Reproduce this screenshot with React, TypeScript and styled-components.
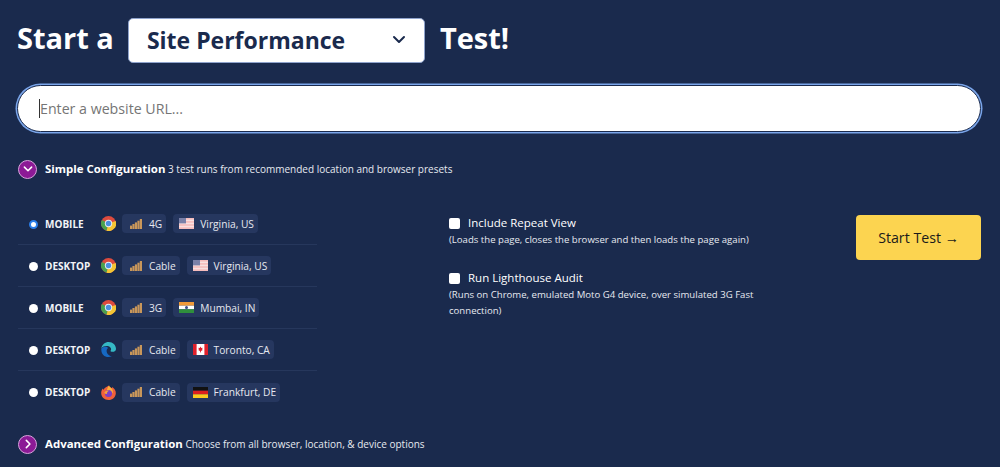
import React from 'react';
import styled, { createGlobalStyle } from 'styled-components';

const GlobalStyle = createGlobalStyle`
  html, body {
    margin: 0;
    padding: 0;
    background: #1a2a4d;
    overflow: hidden;
  }
  body {
    font-family: 'Open Sans', sans-serif;
    color: #fff;
  }
`;

type Row = {
  device: string;
  browser: 'chrome' | 'edge' | 'firefox';
  speed: string;
  flag: 'us' | 'in' | 'ca' | 'de';
  location: string;
  checked?: boolean;
};

const rows: Row[] = [
  { device: 'MOBILE', browser: 'chrome', speed: '4G', flag: 'us', location: 'Virginia, US', checked: true },
  { device: 'DESKTOP', browser: 'chrome', speed: 'Cable', flag: 'us', location: 'Virginia, US' },
  { device: 'MOBILE', browser: 'chrome', speed: '3G', flag: 'in', location: 'Mumbai, IN' },
  { device: 'DESKTOP', browser: 'edge', speed: 'Cable', flag: 'ca', location: 'Toronto, CA' },
  { device: 'DESKTOP', browser: 'firefox', speed: 'Cable', flag: 'de', location: 'Frankfurt, DE' },
];

const BrowserIcon = ({ name }: { name: Row['browser'] }) => {
  if (name === 'chrome') {
    return (
      <svg width="15" height="15" viewBox="0 0 16 16">
        <circle cx="8" cy="8" r="8" fill="#dd4b3e" />
        <path d="M8 8 L1 4.2 A8 8 0 0 0 6 15.8 Z" fill="#4aa14f" />
        <path d="M8 8 L15.6 5.2 A8 8 0 0 1 6 15.8 Z" fill="#f4c534" />
        <circle cx="8" cy="8" r="3.9" fill="#e8eef6" />
        <circle cx="8" cy="8" r="2.9" fill="#4a8fe0" />
      </svg>
    );
  }
  if (name === 'edge') {
    return (
      <svg width="15" height="15" viewBox="0 0 16 16">
        <path d="M0.4 7 C1 2.6 4.4 0 8.2 0 C12.6 0 16 3.2 16 7.4 C16 9.4 14.4 10.4 12.4 10.4 C10.8 10.4 10 9.8 10.2 9.2 C11 8.4 11 6.8 10 5.8 C8 3.8 2.6 3.6 0.4 7 Z" fill="#35b8c4" />
        <path d="M0.4 7 C2.4 4.6 6.4 4.6 7.6 6.4 C5.6 7.4 5 11.6 8.6 14 C9.4 14.6 10.6 15 11.6 15 C10.4 15.7 9.2 16 8 16 C3.2 16 -0.2 12 0.4 7 Z" fill="#1668c2" />
      </svg>
    );
  }
  return (
    <svg width="15" height="15" viewBox="0 0 16 16">
      <path d="M8.6 0.4 C8.8 2 10.6 2.6 11.4 3.6 C11.8 3 11.8 2.6 11.8 2.2 C14.4 4 16 6 15.8 9 C15.6 13 12.2 16 8 16 C3.6 16 0.2 12.8 0.2 8.6 C0.2 6.6 0.8 5 1.8 3.6 C2 4.4 2.4 4.8 2.8 5 C3.4 3 5.8 1.6 8.6 0.4 Z" fill="#f0603a" />
      <path d="M8.6 0.4 C8.8 2 10.6 2.6 11.4 3.6 C12.6 5 13 7 12.2 9 C10.8 6.6 8 6.4 6.4 5.4 C6.6 3.6 7.4 1.8 8.6 0.4 Z" fill="#fbb13c" />
      <circle cx="8" cy="9" r="3.8" fill="#7b3fc4" />
      <path d="M3.4 8.4 C4.4 6.4 6.4 5.8 8.4 6 C6.8 6.8 6 8 6.6 9.4 C5.6 9.8 4.4 9.4 3.4 8.4 Z" fill="#f7a23a" />
    </svg>
  );
};

const SignalIcon = () => (
  <svg width="12" height="10" viewBox="0 0 12 10">
    <rect x="0" y="6.6" width="2.2" height="3.4" fill="#c9975a" />
    <rect x="2.4" y="5" width="2.2" height="5" fill="#c9975a" />
    <rect x="4.9" y="3.4" width="2.2" height="6.6" fill="#c9975a" />
    <rect x="7.4" y="1.7" width="2.2" height="8.3" fill="#c9975a" />
    <rect x="9.8" y="0" width="2.2" height="10" fill="#c9975a" />
  </svg>
);

const Flag = ({ code }: { code: Row['flag'] }) => {
  if (code === 'us') {
    return (
      <svg width="15" height="11" viewBox="0 0 15 11">
        <rect width="15" height="11" fill="#f6bcbc" />
        <rect y="1.6" width="15" height="1.5" fill="#f9e0e0" />
        <rect y="4.7" width="15" height="1.5" fill="#f9e0e0" />
        <rect y="7.8" width="15" height="1.5" fill="#f9e0e0" />
        <rect width="7" height="5.4" fill="#7a80a8" />
      </svg>
    );
  }
  if (code === 'in') {
    return (
      <svg width="15" height="11" viewBox="0 0 15 11">
        <rect width="15" height="3.7" fill="#f19a38" />
        <rect y="3.7" width="15" height="3.6" fill="#fff" />
        <rect y="7.3" width="15" height="3.7" fill="#2f8f3c" />
        <circle cx="7.5" cy="5.5" r="1.5" fill="#3a4a8a" />
      </svg>
    );
  }
  if (code === 'ca') {
    return (
      <svg width="15" height="11" viewBox="0 0 15 11">
        <rect width="15" height="11" fill="#fff" />
        <rect width="3.6" height="11" fill="#e0202c" />
        <rect x="11.4" width="3.6" height="11" fill="#e0202c" />
        <path d="M7.5 2.6 L8.3 4 L9.6 3.8 L9.1 5.4 L9.8 6 L8 7.1 L7.8 8.4 L7.2 8.4 L7 7.1 L5.2 6 L5.9 5.4 L5.4 3.8 L6.7 4 Z" fill="#e0202c" />
      </svg>
    );
  }
  return (
    <svg width="15" height="11" viewBox="0 0 15 11">
      <rect width="15" height="3.7" fill="#111" />
      <rect y="3.7" width="15" height="3.6" fill="#dd1f1f" />
      <rect y="7.3" width="15" height="3.7" fill="#fbc91e" />
    </svg>
  );
};

const Chevron = ({ open }: { open: boolean }) => (
  <svg width="12" height="12" viewBox="0 0 10 10" fill="none" stroke="#fff" strokeWidth="1.3" strokeLinecap="round" strokeLinejoin="round">
    <path d={open ? 'M2 3.4 L5 6.4 L8 3.4' : 'M3.6 2 L6.6 5 L3.6 8'} />
  </svg>
);

export default function App() {
  return (
    <>
      <GlobalStyle />
      <Page>
        <Heading>
          <HeadingText>Start a</HeadingText>
          <Select>
            <SelectLabel>Site Performance</SelectLabel>
            <svg width="14" height="9" viewBox="0 0 14 9" fill="none" stroke="#1a2a4d" strokeWidth="2" strokeLinecap="round" strokeLinejoin="round">
              <path d="M2 2 L7 7 L12 2" />
            </svg>
          </Select>
          <HeadingText>Test!</HeadingText>
        </Heading>

        <UrlBox>
          <Caret />
          <Placeholder>Enter a website URL...</Placeholder>
        </UrlBox>

        <Toggle>
          <ToggleButton><Chevron open /></ToggleButton>
          <ToggleText><strong>Simple Configuration</strong> 3 test runs from recommended location and browser presets</ToggleText>
        </Toggle>

        <Config>
          <Presets>
            {rows.map((row, i) => (
              <PresetRow key={i}>
                <Radio $checked={row.checked} />
                <Device>{row.device}</Device>
                <IconSlot><BrowserIcon name={row.browser} /></IconSlot>
                <SpeedTag><SignalIcon />{row.speed}</SpeedTag>
                <Tag><Flag code={row.flag} />{row.location}</Tag>
              </PresetRow>
            ))}
          </Presets>

          <Options>
            <Option>
              <OptionLabel><Checkbox />Include Repeat View</OptionLabel>
              <OptionNote>(Loads the page, closes the browser and then loads the page again)</OptionNote>
            </Option>
            <Option>
              <OptionLabel><Checkbox />Run Lighthouse Audit</OptionLabel>
              <OptionNote>(Runs on Chrome, emulated Moto G4 device, over simulated 3G Fast connection)</OptionNote>
            </Option>
          </Options>

          <StartButton>Start Test →</StartButton>
        </Config>

        <AdvancedToggle>
          <ToggleButton><Chevron open={false} /></ToggleButton>
          <ToggleText><strong>Advanced Configuration</strong> Choose from all browser, location, &amp; device options</ToggleText>
        </AdvancedToggle>
      </Page>
    </>
  );
}

const Page = styled.div`
  width: 1000px;
  height: 467px;
  box-sizing: border-box;
  padding: 18px 18px 0 17px;
  background: #1a2a4d;
  overflow: hidden;
`;

const Heading = styled.div`
  display: flex;
  align-items: center;
  height: 45px;
`;

const HeadingText = styled.span`
  font-size: 29px;
  font-weight: 700;
  line-height: 40px;
  margin-top: -6px;
  color: #fff;
`;

const Select = styled.div`
  display: flex;
  align-items: center;
  justify-content: space-between;
  box-sizing: border-box;
  width: 297px;
  height: 45px;
  margin: 0 15px 0 14px;
  padding: 0 18px 2px 18px;
  background: #fff;
  border-radius: 5px;
  border: 1px solid #8fa3cc;
`;

const SelectLabel = styled.span`
  font-size: 23px;
  font-weight: 700;
  color: #1a2a4d;
  line-height: 30px;
`;

const UrlBox = styled.div`
  display: flex;
  align-items: center;
  box-sizing: border-box;
  width: 964px;
  height: 47px;
  margin-top: 22px;
  padding-left: 21px;
  background: #fff;
  border-radius: 24px;
  border: 1px solid #1a2a4d;
  box-shadow: 0 0 0 1.5px #7aa5ea;
`;

const Caret = styled.span`
  display: block;
  width: 1px;
  height: 19px;
  background: #333;
`;

const Placeholder = styled.span`
  font-size: 14.2px;
  color: #757575;
`;

const Toggle = styled.div`
  display: flex;
  align-items: center;
  height: 20px;
  margin-top: 27px;
`;

const AdvancedToggle = styled(Toggle)`
  margin-top: 21px;
`;

const ToggleButton = styled.span`
  display: flex;
  align-items: center;
  justify-content: center;
  box-sizing: border-box;
  width: 19px;
  height: 19px;
  margin-left: 1px;
  margin-right: 8px;
  border-radius: 50%;
  background: #8c1a96;
  border: 1px solid #d9a3dd;
`;

const ToggleText = styled.span`
  font-size: 10px;
  color: #e6e9f0;
  line-height: 16px;
  strong {
    font-size: 11.45px;
    font-weight: 700;
    color: #fff;
  }
`;

const Config = styled.div`
  display: flex;
  align-items: flex-start;
  margin-top: 24px;
`;

const Presets = styled.div`
  display: flex;
  flex-direction: column;
  width: 299px;
  margin-left: 1px;
`;

const PresetRow = styled.div`
  display: flex;
  align-items: center;
  box-sizing: border-box;
  height: 42px;
  padding-left: 11px;
  border-bottom: 1px solid #26375c;

  &:last-child {
    border-bottom: 0;
  }
`;

const Radio = styled.span<{ $checked?: boolean }>`
  box-sizing: border-box;
  width: 9px;
  height: 9px;
  margin-top: 1px;
  margin-right: 7px;
  border-radius: 50%;
  background: #fff;
  border: ${({ $checked }) => ($checked ? '2.5px solid #2a7de8' : '0')};
`;

const Device = styled.span`
  width: 56px;
  font-size: 10px;
  font-weight: 700;
  color: #f2f4f8;
`;

const IconSlot = styled.span`
  display: flex;
  width: 21px;
`;

const Tag = styled.span`
  display: flex;
  align-items: center;
  gap: 6px;
  height: 19px;
  margin-right: 7px;
  padding: 0 4px 0 6px;
  border-radius: 4px;
  background: #26375f;
  font-size: 10.2px;
  color: #e6e9f0;
`;

const SpeedTag = styled(Tag)`
  gap: 7px;
  padding-left: 8px;
`;

const Options = styled.div`
  display: flex;
  flex-direction: column;
  gap: 21px;
  width: 340px;
  margin-left: 132px;
  padding-top: 11px;
`;

const Option = styled.div`
  display: flex;
  flex-direction: column;
`;

const OptionLabel = styled.label`
  display: flex;
  align-items: center;
  font-size: 11.5px;
  line-height: 18px;
  color: #fff;
`;

const Checkbox = styled.span`
  width: 11px;
  height: 11px;
  margin-right: 8px;
  border-radius: 2px;
  background: #fff;
`;

const OptionNote = styled.span`
  font-size: 9.6px;
  line-height: 16px;
  color: #e6e9f0;
`;

const StartButton = styled.button`
  width: 125px;
  height: 45px;
  margin-left: 67px;
  margin-top: 12px;
  padding: 0;
  border: 0;
  border-radius: 4px;
  background: #fcd450;
  font-family: 'Open Sans', sans-serif;
  font-size: 14.2px;
  color: #1a1a1a;
`;
